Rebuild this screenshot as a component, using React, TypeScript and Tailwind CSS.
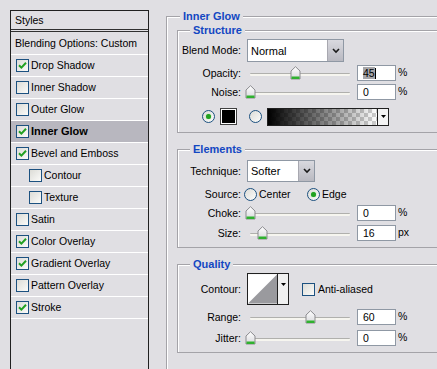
import React from 'react';

const font = { fontFamily: '"Liberation Sans", Arial, sans-serif' };

type StyleItem = { label: string; checked: boolean; indent?: boolean; active?: boolean };

const styleItems: StyleItem[] = [
  { label: 'Drop Shadow', checked: true },
  { label: 'Inner Shadow', checked: false },
  { label: 'Outer Glow', checked: false },
  { label: 'Inner Glow', checked: true, active: true },
  { label: 'Bevel and Emboss', checked: true },
  { label: 'Contour', checked: false, indent: true },
  { label: 'Texture', checked: false, indent: true },
  { label: 'Satin', checked: false },
  { label: 'Color Overlay', checked: true },
  { label: 'Gradient Overlay', checked: true },
  { label: 'Pattern Overlay', checked: false },
  { label: 'Stroke', checked: true },
];

function CheckBox({ checked }: { checked: boolean }) {
  return (
    <span className="flex size-[13px] shrink-0 items-center justify-center border border-[#1c5180] bg-gradient-to-br from-[#dcdcd7] to-[#fbfbf9]">
      {checked && (
        <svg width="9" height="9" viewBox="0 0 9 9">
          <path d="M1 4.2 L3.4 6.6 L8 1.8" fill="none" stroke="#21a121" strokeWidth="2" />
        </svg>
      )}
    </span>
  );
}

function Radio({ checked }: { checked: boolean }) {
  return (
    <span className="flex size-[13px] shrink-0 items-center justify-center rounded-full border border-[#1c5180] bg-gradient-to-br from-[#dcdcd7] to-[#fcfcfb]">
      {checked && <span className="size-[5px] rounded-full bg-[#21a121] shadow-[0_0_1px_#5fd35f]" />}
    </span>
  );
}

function DropButton() {
  return (
    <span className="flex h-full w-[16px] shrink-0 items-center justify-center border-l border-[#a8a8b0] bg-gradient-to-b from-[#d9d9df] to-[#b9b9c1]">
      <svg width="8" height="6" viewBox="0 0 8 6">
        <path d="M1 1 L4 4 L7 1" fill="none" stroke="#1a1a1a" strokeWidth="1.6" />
      </svg>
    </span>
  );
}

function Thumb({ at }: { at: number }) {
  return (
    <svg className="absolute top-[1px]" style={{ left: at - 5 }} width="11" height="14" viewBox="0 0 11 14">
      <defs>
        <linearGradient id="tg" x1="0" y1="0" x2="0" y2="1">
          <stop offset="0" stopColor="#ffffff" />
          <stop offset="1" stopColor="#d8d8dc" />
        </linearGradient>
      </defs>
      <path d="M1 5 L5.5 0.7 L10 5 V13 H1 Z" fill="url(#tg)" stroke="#8b8b8f" />
      <rect x="1.5" y="10.5" width="8" height="2.5" fill="#2fb12f" />
    </svg>
  );
}

function SliderRow({ label, at, value, unit, selected, mt }: { label: string; at: number; value: string; unit: string; selected?: boolean; mt: string }) {
  return (
    <div className={`flex h-[16px] items-center ${mt}`}>
      <span className="w-[63px] text-right">{label}</span>
      <div className="relative ml-[9px] h-[16px] w-[100px]">
        <div className="absolute left-0 right-0 top-[8px] h-[3px] rounded-[1px] border-t border-[#b0b0ad] bg-[#f6f5ef]" />
        <Thumb at={at} />
      </div>
      <div className="ml-[7px] flex h-[16px] w-[39px] items-center border border-[#8f98a4] bg-white pl-[5px]">
        {selected ? (
          <span className="flex items-center">
            <span className="bg-[#a5a5a8] leading-[12px]">{value}</span>
            <span className="h-[11px] w-px bg-black" />
          </span>
        ) : (
          <span>{value}</span>
        )}
      </div>
      <span className="ml-[2px] -mt-[2px]">{unit}</span>
    </div>
  );
}

function Group({ title, children, className }: { title: string; children: React.ReactNode; className?: string }) {
  return (
    <div className={`relative w-[280px] border border-[#a4a3a8] shadow-[inset_1px_1px_0_#ffffff] ${className ?? ''}`}>
      <span className="absolute -top-[8px] left-[12px] bg-[#e0dfe3] px-[3px] text-[11px] font-bold leading-[14px] text-[#1347c2]">{title}</span>
      {children}
    </div>
  );
}

export default function App() {
  return (
    <div className="h-[369px] w-[437px] overflow-hidden bg-[#e0dfe3] text-[10.5px] leading-[13px] text-black" style={font}>
      <div className="flex">
        {/* styles list */}
        <div className="ml-[10px] mt-[10px] h-[380px] w-[139px] shrink-0 border-x border-t border-[#202020]">
          <div className="flex h-[21px] items-center border-b-[3px] border-double border-[#303030] pl-[4px]">Styles</div>
          <div className="flex h-[23px] items-center border-b border-white pl-[4px]">Blending Options: Custom</div>
          {styleItems.map((s) => (
            <div
              key={s.label}
              className={`flex h-[22px] items-center gap-[2px] border-b border-white ${s.indent ? 'pl-[18px]' : 'pl-[5px]'} ${s.active ? 'bg-[#b8b7bf] text-[11px] font-bold' : ''}`}
            >
              <CheckBox checked={s.checked} />
              <span>{s.label}</span>
            </div>
          ))}
        </div>

        {/* settings */}
        <div className="relative ml-[17px] mt-[16px] h-[400px] w-[300px] shrink-0 border border-[#a4a3a8] pl-[10px] shadow-[inset_1px_1px_0_#ffffff]">
          <span className="absolute -top-[8px] left-[13px] bg-[#e0dfe3] px-[3px] text-[11px] font-bold leading-[14px] text-[#1347c2]">Inner Glow</span>

          <Group title="Structure" className="mt-[13px] pb-[7px]">
            <div className="mt-[8px] flex h-[23px] items-center">
              <span className="w-[63px] text-right">Blend Mode:</span>
              <div className="ml-[6px] flex h-[23px] w-[97px] items-center border border-[#8f98a4] bg-white">
                <span className="flex-1 pl-[3px] pt-[2px] text-[11px]">Normal</span>
                <DropButton />
              </div>
            </div>
            <SliderRow label="Opacity:" at={45} value="45" unit="%" selected mt="mt-[3px]" />
            <SliderRow label="Noise:" at={0} value="0" unit="%" mt="mt-[3px]" />
            <div className="mt-[8px] flex h-[17px] items-center">
              <span className="ml-[24px]"><Radio checked /></span>
              <span className="ml-[5px] size-[17px] border border-[#404040] bg-black shadow-[inset_0_0_0_1px_#ffffff]" />
              <span className="ml-[12px]"><Radio checked={false} /></span>
              <div className="ml-[5px] flex h-[18px] w-[122px] border border-[#202020]">
                <div className="relative flex-1 bg-[repeating-conic-gradient(#cfcfcf_0_25%,#ffffff_0_50%)] bg-[length:8px_8px]">
                  <div className="absolute inset-0 bg-gradient-to-r from-black to-transparent" />
                </div>
                <span className="flex w-[11px] items-center justify-center border-l border-[#202020] bg-[#f3f3f3]">
                  <svg width="5" height="3" viewBox="0 0 5 3"><path d="M0 0 H5 L2.5 3 Z" fill="#000" /></svg>
                </span>
              </div>
            </div>
          </Group>

          <Group title="Elements" className="mt-[16px] pb-[6px]">
            <div className="mt-[10px] flex h-[22px] items-center">
              <span className="w-[63px] text-right">Technique:</span>
              <div className="ml-[6px] flex h-[22px] w-[68px] items-center border border-[#8f98a4] bg-white">
                <span className="flex-1 pl-[3px] pt-[1px] text-[11px]">Softer</span>
                <DropButton />
              </div>
            </div>
            <div className="mt-[5px] flex h-[14px] items-center">
              <span className="w-[63px] text-right">Source:</span>
              <span className="ml-[3px]"><Radio checked={false} /></span>
              <span className="ml-[2px] w-[48px]">Center</span>
              <span><Radio checked /></span>
              <span className="ml-[2px]">Edge</span>
            </div>
            <SliderRow label="Choke:" at={0} value="0" unit="%" mt="mt-[4px]" />
            <SliderRow label="Size:" at={12} value="16" unit="px" mt="mt-[4px]" />
          </Group>

          <Group title="Quality" className="mt-[16px] pb-[6px]">
            <div className="mt-[8px] flex h-[32px] items-center">
              <span className="w-[63px] text-right">Contour:</span>
              <div className="ml-[6px] flex h-[32px] w-[42px] border border-[#202020] bg-[#f0f0f0]">
                <svg width="30" height="30" viewBox="0 0 30 30" className="border-r border-[#202020]">
                  <rect width="30" height="30" fill="#ffffff" />
                  <path d="M0 30 L30 0 V30 Z" fill="#9a9a9e" />
                </svg>
                <span className="flex flex-1 items-start justify-center pt-[9px]">
                  <svg width="5" height="3" viewBox="0 0 5 3"><path d="M0 0 H5 L2.5 3 Z" fill="#000" /></svg>
                </span>
              </div>
              <span className="ml-[13px]"><CheckBox checked={false} /></span>
              <span className="ml-[3px]">Anti-aliased</span>
            </div>
            <SliderRow label="Range:" at={60} value="60" unit="%" mt="mt-[4px]" />
            <SliderRow label="Jitter:" at={0} value="0" unit="%" mt="mt-[5px]" />
          </Group>
        </div>
      </div>
    </div>
  );
}
